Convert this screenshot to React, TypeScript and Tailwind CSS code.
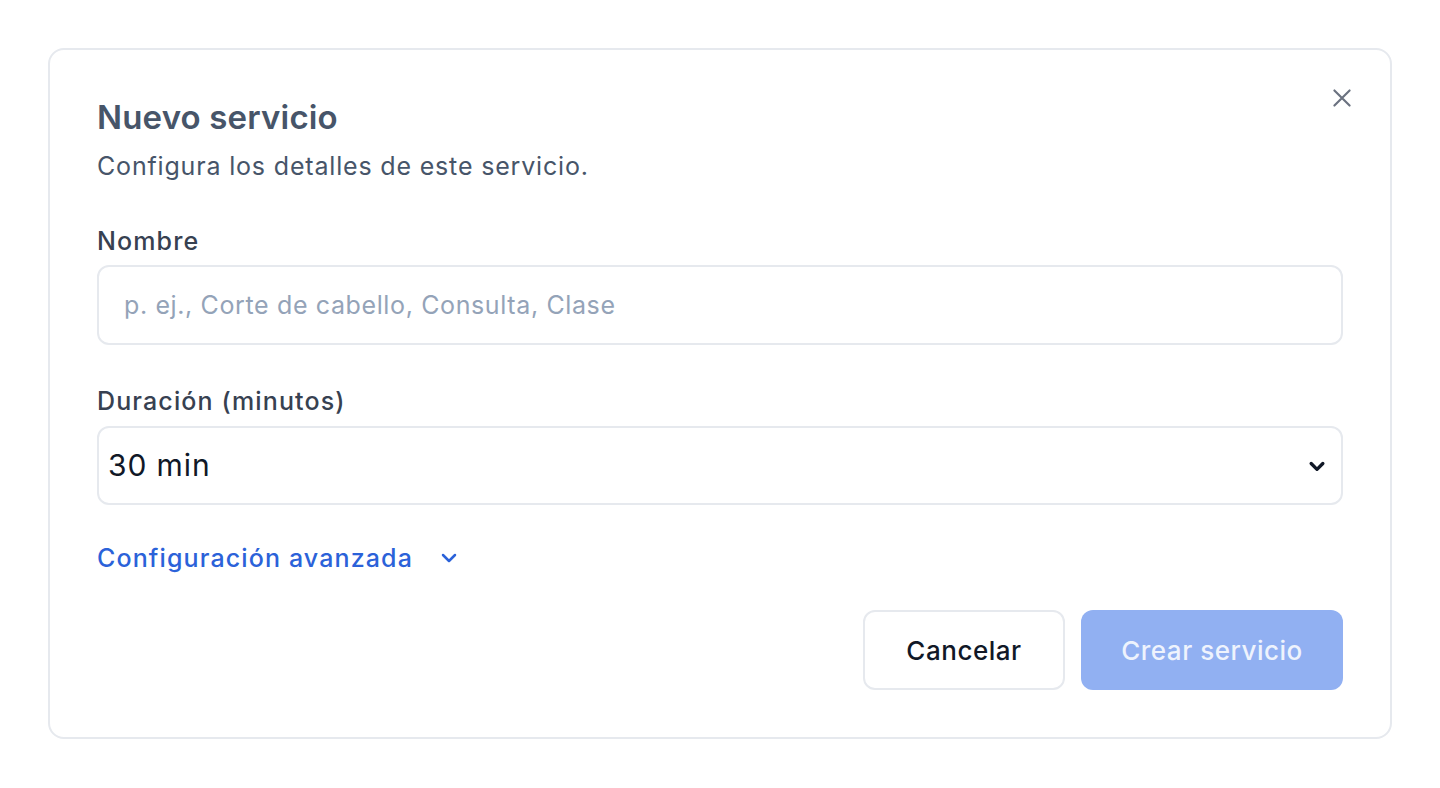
import { useState } from 'react';

export default function App() {
    const [name, setName] = useState('');
    const [duration, setDuration] = useState('30');
    const [advanced, setAdvanced] = useState(false);

    return (
        <div className="min-h-screen bg-white p-12 font-['Inter',sans-serif]">
            <div className="relative rounded-2xl border-2 border-[#e6e9ee] bg-white px-[47px] pt-[47px] pb-[47px]">
                {/* Close */}
                <button className="absolute right-[32px] top-[32px] flex h-8 w-8 items-center justify-center text-[#6b7280]">
                    <svg className="h-[26px] w-[26px]" fill="none" stroke="currentColor" viewBox="0 0 24 24">
                        <path strokeLinecap="round" strokeLinejoin="round" strokeWidth={2} d="M5 5l14 14M19 5L5 19" />
                    </svg>
                </button>

                <h2 className="text-[33px] font-semibold leading-10 tracking-[0.005em] text-[#475569]">Nuevo servicio</h2>
                <p className="mt-[13px] text-[25px] leading-8 tracking-[0.033em] text-[#475569]">Configura los detalles de este servicio.</p>

                <label className="mt-[43px] block text-[25px] font-medium leading-8 tracking-[0.045em] text-[#374151]">Nombre</label>
                <input
                    value={name}
                    onChange={(e) => setName(e.target.value)}
                    placeholder="p. ej., Corte de cabello, Consulta, Clase"
                    className="mt-2 block h-20 w-full rounded-xl border-2 border-[#e6e9ee] px-[25px] text-[25px] tracking-[0.025em] text-[#111827] outline-none placeholder:text-[#94a3b8]"
                />

                <label className="mt-10 block text-[25px] font-medium leading-8 tracking-[0.045em] text-[#374151]">Duración (minutos)</label>
                <div className="relative mt-[9px]">
                    <select
                        value={duration}
                        onChange={(e) => setDuration(e.target.value)}
                        className="block h-[79px] w-full appearance-none rounded-xl border-2 border-[#e6e9ee] bg-white pl-[9px] text-[30px] tracking-[0.03em] text-[#111827] outline-none"
                    >
                        <option value="15">15 min</option>
                        <option value="30">30 min</option>
                        <option value="45">45 min</option>
                        <option value="60">60 min</option>
                    </select>
                    <svg className="pointer-events-none absolute right-[16px] top-1/2 h-5 w-5 -translate-y-1/2 text-[#111827]" fill="none" stroke="currentColor" viewBox="0 0 24 24">
                        <path strokeLinecap="round" strokeLinejoin="round" strokeWidth={4} d="M5 9l7 7 7-7" />
                    </svg>
                </div>

                <button
                    onClick={() => setAdvanced(!advanced)}
                    className="mt-[37px] flex items-center gap-[24px] text-[25px] font-medium leading-8 tracking-[0.045em] text-[#2b62d9]"
                >
                    Configuración avanzada
                    <svg className={`h-6 w-6 transition-transform ${advanced ? 'rotate-180' : ''}`} fill="none" stroke="currentColor" viewBox="0 0 24 24">
                        <path strokeLinecap="round" strokeLinejoin="round" strokeWidth={2.5} d="M6 9l6 6 6-6" />
                    </svg>
                </button>

                <div className="mt-9 flex justify-end gap-4">
                    <button className="h-20 w-[202px] rounded-xl border-2 border-[#e6e9ee] bg-white text-[26px] font-medium tracking-[0.02em] text-[#111827]">
                        Cancelar
                    </button>
                    <button disabled className="h-20 w-[262px] rounded-xl bg-[#91b0f2] text-[26px] font-medium tracking-[0.02em] text-[#eef3fd]">
                        Crear servicio
                    </button>
                </div>
            </div>
        </div>
    );
}
